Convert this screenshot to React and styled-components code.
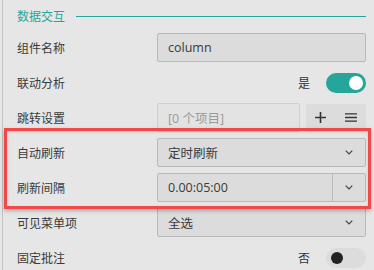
import React from "react";
import styled, { createGlobalStyle } from "styled-components";

const Global = createGlobalStyle`
  html, body { margin: 0; padding: 0; background: #e6e6e6; }
  body { font-family: "Open Sans", "Noto Sans CJK SC", sans-serif; width: 374px; height: 270px; overflow: hidden; }
`;

const Panel = styled.div`
  margin-left: 2px;
  border-left: 1px solid #c4c4c4;
  padding: 0 8px 0 14px;
  height: 270px;
  box-sizing: border-box;
`;

const Header = styled.div`
  display: flex;
  align-items: center;
  gap: 11px;
  height: 30px;
  color: #26a69a;
  font-size: 12px;
  font-family: "Noto Sans CJK SC", sans-serif;
  &::after {
    content: "";
    flex: 1;
    height: 1px;
    background: #26a69a;
    margin-top: 2px;
  }
`;

const Row = styled.div`
  display: flex;
  align-items: center;
  height: 35px;
`;

const Label = styled.div`
  width: 140px;
  flex: none;
  font-size: 12px;
  color: #3a3a3a;
  font-family: "Noto Sans CJK SC", sans-serif;
`;

const Field = styled.div`
  flex: 1;
  height: 29px;
  box-sizing: border-box;
  display: flex;
  align-items: center;
  border: 1px solid ${(p) => (p.$disabled ? "#cfcfcf" : "#b9b9b9")};
  border-radius: 2px;
  background: ${(p) => (p.$disabled ? "#e3e3e3" : "#dcdcdc")};
  color: ${(p) => (p.$disabled ? "#9a9a9a" : "#3a3a3a")};
  font-size: 12.5px;
  padding-left: 10px;
  font-family: "Open Sans", "Noto Sans CJK SC", sans-serif;
  overflow: hidden;
`;

const FieldText = styled.span`
  flex: 1;
`;

const Chevron = styled.div`
  width: 32px;
  align-self: stretch;
  display: flex;
  align-items: center;
  justify-content: center;
  border-left: ${(p) => (p.$divided ? "1px solid #b9b9b9" : "none")};
`;

const Right = styled.div`
  flex: 1;
  display: flex;
  justify-content: flex-end;
  align-items: center;
  gap: 16px;
  font-size: 12px;
  color: #333;
  font-family: "Noto Sans CJK SC", sans-serif;
`;

const Toggle = styled.div`
  width: 40px;
  height: 20px;
  border-radius: 10px;
  background: ${(p) => (p.$on ? "#26a69a" : "#dcdcdc")};
  position: relative;
  &::after {
    content: "";
    position: absolute;
    top: ${(p) => (p.$on ? 3 : 4)}px;
    ${(p) => (p.$on ? "right: 3px;" : "left: 5px;")}
    width: ${(p) => (p.$on ? 14 : 12)}px;
    height: ${(p) => (p.$on ? 14 : 12)}px;
    border-radius: 50%;
    background: ${(p) => (p.$on ? "#fff" : "#222")};
  }
`;

const Buttons = styled.div`
  margin-left: 6px;
  width: 60px;
  height: 28px;
  background: #dcdcdc;
  display: flex;
  align-items: center;
  justify-content: space-around;
`;

const Highlight = styled.div`
  position: relative;
  &::after {
    content: "";
    position: absolute;
    left: -13px;
    right: -5px;
    top: -7px;
    bottom: -4px;
    border: 3px solid #f24848;
    box-shadow: 0 2px 4px rgba(0, 0, 0, 0.25), inset 0 1px 3px rgba(0,0,0,0.15);
    pointer-events: none;
  }
`;

const Down = () => (
  <svg width="8" height="5" viewBox="0 0 8 5">
    <path d="M0.7 0.7 L4 4 L7.3 0.7" fill="none" stroke="#444" strokeWidth="1.2" />
  </svg>
);

const Plus = () => (
  <svg width="11" height="11" viewBox="0 0 11 11">
    <path d="M5.5 0 V11 M0 5.5 H11" stroke="#333" strokeWidth="1.6" />
  </svg>
);

const Menu = () => (
  <svg width="12" height="9" viewBox="0 0 12 9">
    <path d="M0 0.8 H12 M0 4.5 H12 M0 8.2 H12" stroke="#333" strokeWidth="1.3" />
  </svg>
);

export default function App() {
  return (
    <>
      <Global />
      <Panel>
        <Header>数据交互</Header>
        <Row>
          <Label>组件名称</Label>
          <Field>column</Field>
        </Row>
        <Row>
          <Label>联动分析</Label>
          <Right>
            是<Toggle $on />
          </Right>
        </Row>
        <Row>
          <Label>跳转设置</Label>
          <Field $disabled>[0 个项目]</Field>
          <Buttons>
            <Plus />
            <Menu />
          </Buttons>
        </Row>
        <Highlight>
          <Row>
            <Label>自动刷新</Label>
            <Field>
              <FieldText>定时刷新</FieldText>
              <Chevron><Down /></Chevron>
            </Field>
          </Row>
          <Row>
            <Label>刷新间隔</Label>
            <Field>
              <FieldText>0.00:05:00</FieldText>
              <Chevron $divided><Down /></Chevron>
            </Field>
          </Row>
        </Highlight>
        <Row>
          <Label>可见菜单项</Label>
          <Field>
            <FieldText>全选</FieldText>
            <Chevron><Down /></Chevron>
          </Field>
        </Row>
        <Row>
          <Label>固定批注</Label>
          <Right>
            否<Toggle />
          </Right>
        </Row>
      </Panel>
    </>
  );
}
